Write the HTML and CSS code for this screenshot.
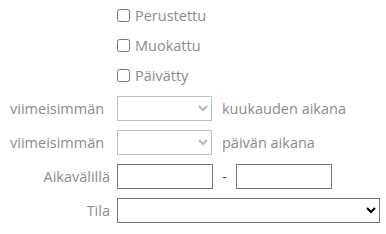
FILE: index.html
```html
<!DOCTYPE html>
<html lang="fi">
<head>
    <meta charset="UTF-8">
    <meta name="viewport" content="width=device-width, initial-scale=1.0">
    <title>Haku</title>
    <link rel="stylesheet" href="styles.css">
</head>
<body>
    <form class="filter">
        <div class="row check-row">
            <span class="label"></span>
            <label class="check"><input type="checkbox"> Perustettu</label>
        </div>
        <div class="row check-row">
            <span class="label"></span>
            <label class="check"><input type="checkbox"> Muokattu</label>
        </div>
        <div class="row check-row last">
            <span class="label"></span>
            <label class="check"><input type="checkbox"> Päivätty</label>
        </div>

        <div class="row field-row">
            <span class="label left">viimeisimmän</span>
            <select class="small" disabled><option></option></select>
            <span class="suffix">kuukauden aikana</span>
        </div>
        <div class="row field-row">
            <span class="label left">viimeisimmän</span>
            <select class="small" disabled><option></option></select>
            <span class="suffix">päivän aikana</span>
        </div>
        <div class="row field-row">
            <span class="label">Aikavälillä</span>
            <input type="text" class="date">
            <span class="dash">-</span>
            <input type="text" class="date">
        </div>
        <div class="row field-row">
            <span class="label">Tila</span>
            <select class="wide"><option></option></select>
        </div>
    </form>
</body>
</html>
```

FILE: styles.css
```css
* {
    margin: 0;
    padding: 0;
    box-sizing: border-box;
}

body {
    font-family: "Open Sans", "Liberation Sans", sans-serif;
    font-size: 14.5px;
    color: #8c8c8c;
    background: #fff;
}

.row {
    display: flex;
    align-items: center;
}

.label {
    width: 117px;
    flex: none;
    padding-right: 7px;
    text-align: right;
}

.label.left {
    text-align: left;
    padding-left: 10px;
}

.check-row {
    height: 30px;
}

.check-row.last {
    height: 31px;
    margin-bottom: 5px;
}

.check {
    display: flex;
    align-items: center;
}

.check input {
    width: 13px;
    height: 13px;
    margin: 0 5px 0 0;
}

.field-row {
    height: 25px;
    margin-bottom: 9px;
}

select,
input[type="text"] {
    height: 25px;
    border: 1px solid #767676;
    border-radius: 0;
    background: #fff;
    font-family: inherit;
    font-size: 14px;
}

select.small {
    width: 95px;
}

select:disabled {
    border-color: #a9a9a9;
    background-color: #fff;
    color: #999;
}

.suffix {
    margin-left: 10px;
}

.date {
    width: 96px;
}

.dash {
    width: 23px;
    text-align: center;
    color: #444;
}

select.wide {
    width: 263px;
}
```
